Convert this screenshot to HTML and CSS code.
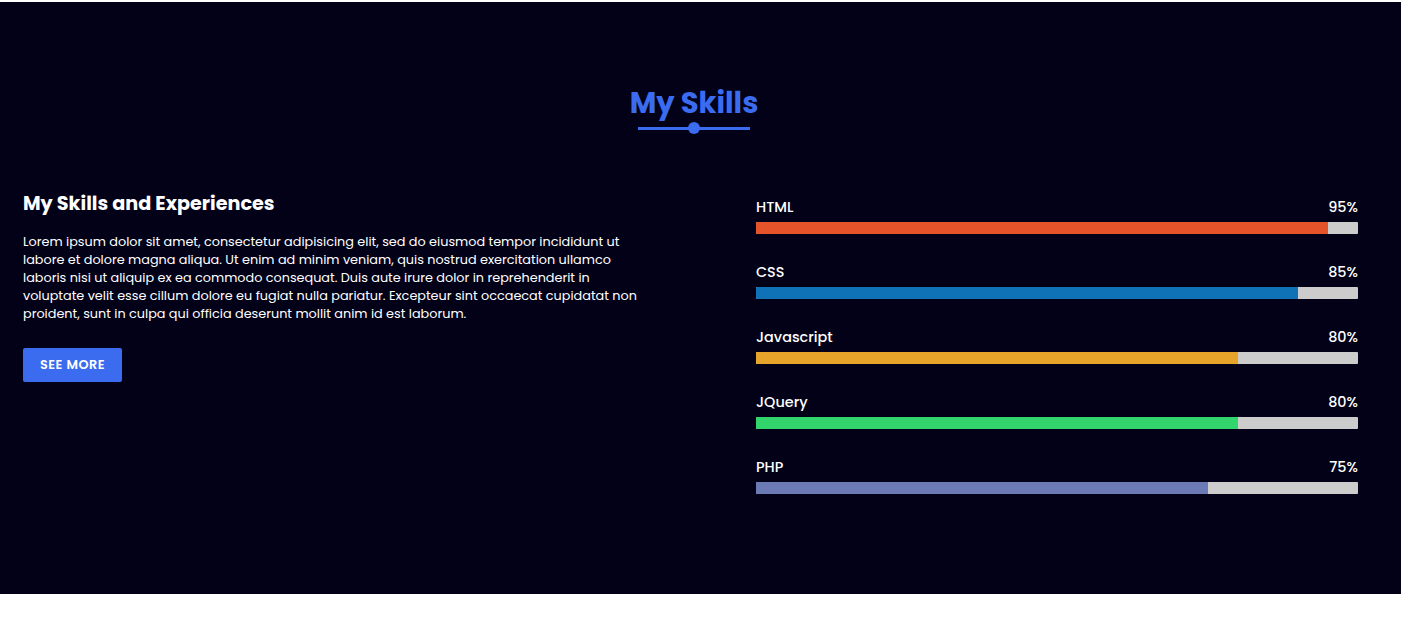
FILE: index.html
```html
<!DOCTYPE html>
<html lang="en">
<head>
<meta charset="utf-8">
<title>My Skills</title>
<link rel="stylesheet" href="styles.css">
</head>
<body>
<section class="skills">
  <header class="skills-header">
    <h2 class="skills-title">My Skills</h2>
    <div class="title-line"></div>
  </header>
  <div class="skills-content">
    <div class="skills-intro">
      <h3 class="intro-heading">My Skills and Experiences</h3>
      <p class="intro-text">Lorem ipsum dolor sit amet, consectetur adipisicing elit, sed do eiusmod tempor incididunt ut labore et dolore magna aliqua. Ut enim ad minim veniam, quis nostrud exercitation ullamco laboris nisi ut aliquip ex ea commodo consequat. Duis aute irure dolor in reprehenderit in voluptate velit esse cillum dolore eu fugiat nulla pariatur. Excepteur sint occaecat cupidatat non proident, sunt in culpa qui officia deserunt mollit anim id est laborum.</p>
      <a class="btn" href="#">See more</a>
    </div>
    <div class="skills-bars">
      <div class="skill">
        <div class="skill-info"><span>HTML</span><span>95%</span></div>
        <div class="bar"><div class="bar-fill html" style="width:95%"></div></div>
      </div>
      <div class="skill">
        <div class="skill-info"><span>CSS</span><span>85%</span></div>
        <div class="bar"><div class="bar-fill css" style="width:90%"></div></div>
      </div>
      <div class="skill">
        <div class="skill-info"><span>Javascript</span><span>80%</span></div>
        <div class="bar"><div class="bar-fill js" style="width:80%"></div></div>
      </div>
      <div class="skill">
        <div class="skill-info"><span>JQuery</span><span>80%</span></div>
        <div class="bar"><div class="bar-fill jquery" style="width:80%"></div></div>
      </div>
      <div class="skill">
        <div class="skill-info"><span>PHP</span><span>75%</span></div>
        <div class="bar"><div class="bar-fill php" style="width:75%"></div></div>
      </div>
    </div>
  </div>
</section>
</body>
</html>
```
FILE: styles.css
```css
* { box-sizing: border-box; }
body {
  margin: 0;
  background: #ffffff;
  font-family: "Poppins", "Inter", "Open Sans", sans-serif;
}
.skills {
  margin-top: 2px;
  width: 1401px;
  height: 592px;
  background: #020118;
  color: #ffffff;
  padding-top: 82px;
}
.skills-header {
  width: 1388px;
  display: flex;
  flex-direction: column;
  align-items: center;
}
.skills-title {
  margin: 0;
  font-size: 29px;
  line-height: 38px;
  font-weight: 700;
  color: #3b6cf0;
}
.title-line {
  position: relative;
  width: 112px;
  height: 12px;
  margin-top: 0;
}
.title-line::before {
  content: "";
  position: absolute;
  left: 0;
  right: 0;
  top: 5px;
  height: 3px;
  background: #3b6cf0;
}
.title-line::after {
  content: "";
  position: absolute;
  left: 50px;
  top: 0;
  width: 12px;
  height: 12px;
  border-radius: 50%;
  background: #3b6cf0;
}
.skills-content {
  display: flex;
  align-items: flex-start;
  margin-top: 55px;
  padding: 0 43px 0 23px;
}
.skills-intro {
  width: 620px;
}
.intro-heading {
  margin: 0;
  padding-top: 1px;
  font-size: 19.2px;
  line-height: 28px;
  font-weight: 700;
}
.intro-text {
  margin: 15px 0 0;
  font-size: 12.8px;
  line-height: 18px;
}
.btn {
  display: inline-block;
  margin-top: 25px;
  width: 99px;
  height: 34px;
  line-height: 34px;
  text-align: center;
  background: #3b6cf0;
  color: #ffffff;
  border-radius: 2px;
  text-decoration: none;
  text-transform: uppercase;
  font-size: 12.8px;
  font-weight: 600;
  letter-spacing: 0.5px;
}
.skills-bars {
  width: 602px;
  margin-left: auto;
  padding-top: 8px;
}
.skill {
  margin-bottom: 28px;
}
.skill-info {
  display: flex;
  justify-content: space-between;
  font-size: 14.4px;
  line-height: 20px;
  font-weight: 500;
}
.bar {
  margin-top: 5px;
  height: 12px;
  background: #cccccc;
  border-radius: 1px;
  overflow: hidden;
}
.bar-fill {
  height: 100%;
}
.html { background: #e5532a; }
.css { background: #0f72b7; }
.js { background: #e6a52a; }
.jquery { background: #31d56c; }
.php { background: #6b79b4; }
```
